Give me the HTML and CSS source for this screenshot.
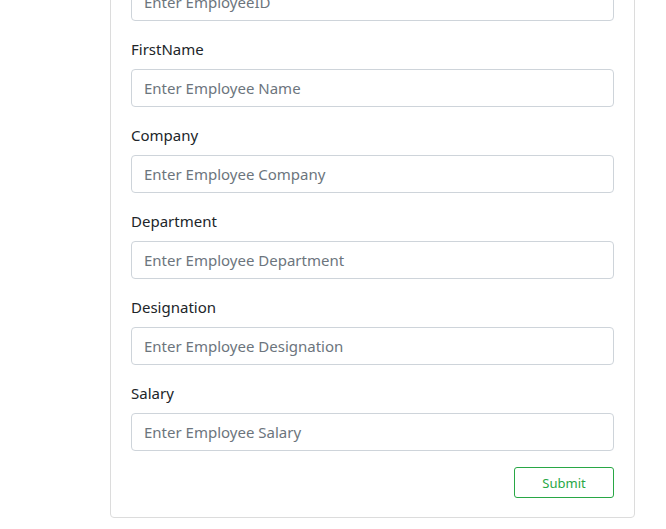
FILE: index.html
```html
<!DOCTYPE html>
<html>
<head>
<meta charset="utf-8">
<link rel="stylesheet" href="styles.css">
</head>
<body>
<div class="card">
  <form class="card-body">
    <div class="form-group">
      <label>EmployeeID</label>
      <input class="form-control" placeholder="Enter EmployeeID">
    </div>
    <div class="form-group">
      <label>FirstName</label>
      <input class="form-control" placeholder="Enter Employee Name">
    </div>
    <div class="form-group">
      <label>Company</label>
      <input class="form-control" placeholder="Enter Employee Company">
    </div>
    <div class="form-group">
      <label>Department</label>
      <input class="form-control" placeholder="Enter Employee Department">
    </div>
    <div class="form-group">
      <label>Designation</label>
      <input class="form-control" placeholder="Enter Employee Designation">
    </div>
    <div class="form-group">
      <label>Salary</label>
      <input class="form-control" placeholder="Enter Employee Salary">
    </div>
    <div class="actions">
      <button type="button" class="btn-submit">Submit</button>
    </div>
  </form>
</div>
</body>
</html>
```
FILE: styles.css
```css
html, body {
  margin: 0;
  padding: 0;
  background: #fff;
  overflow: hidden;
}
body {
  font-family: "Noto Sans", "Open Sans", sans-serif;
  font-size: 16px;
  line-height: 1.5;
  color: #212529;
}
.card {
  box-sizing: border-box;
  width: 525px;
  margin-left: 110px;
  margin-top: -70px;
  border: 1px solid #dcdcdc;
  border-radius: 4px;
  background: #fff;
}
.card-body {
  padding: 20px 20px 19px;
  margin: 0;
}
.form-group {
  margin-bottom: 16px;
}
label {
  display: block;
  margin-bottom: 8px;
  font-size: 15px;
  height: 24px;
  line-height: 24px;
}
.form-control {
  display: block;
  box-sizing: border-box;
  width: 100%;
  height: 38px;
  padding: 6px 12px;
  font-family: inherit;
  font-size: 15px;
  color: #495057;
  border: 1px solid #ced4da;
  border-radius: 4px;
  background: #fff;
  outline: none;
}
.form-control::placeholder {
  color: #6c757d;
  opacity: 1;
}
.actions {
  display: flex;
  justify-content: flex-end;
}
.btn-submit {
  box-sizing: border-box;
  width: 100px;
  height: 31px;
  padding: 4px 8px;
  font-family: inherit;
  font-size: 13px;
  color: #28a745;
  background: #fff;
  border: 1px solid #28a745;
  border-radius: 3px;
}
```
